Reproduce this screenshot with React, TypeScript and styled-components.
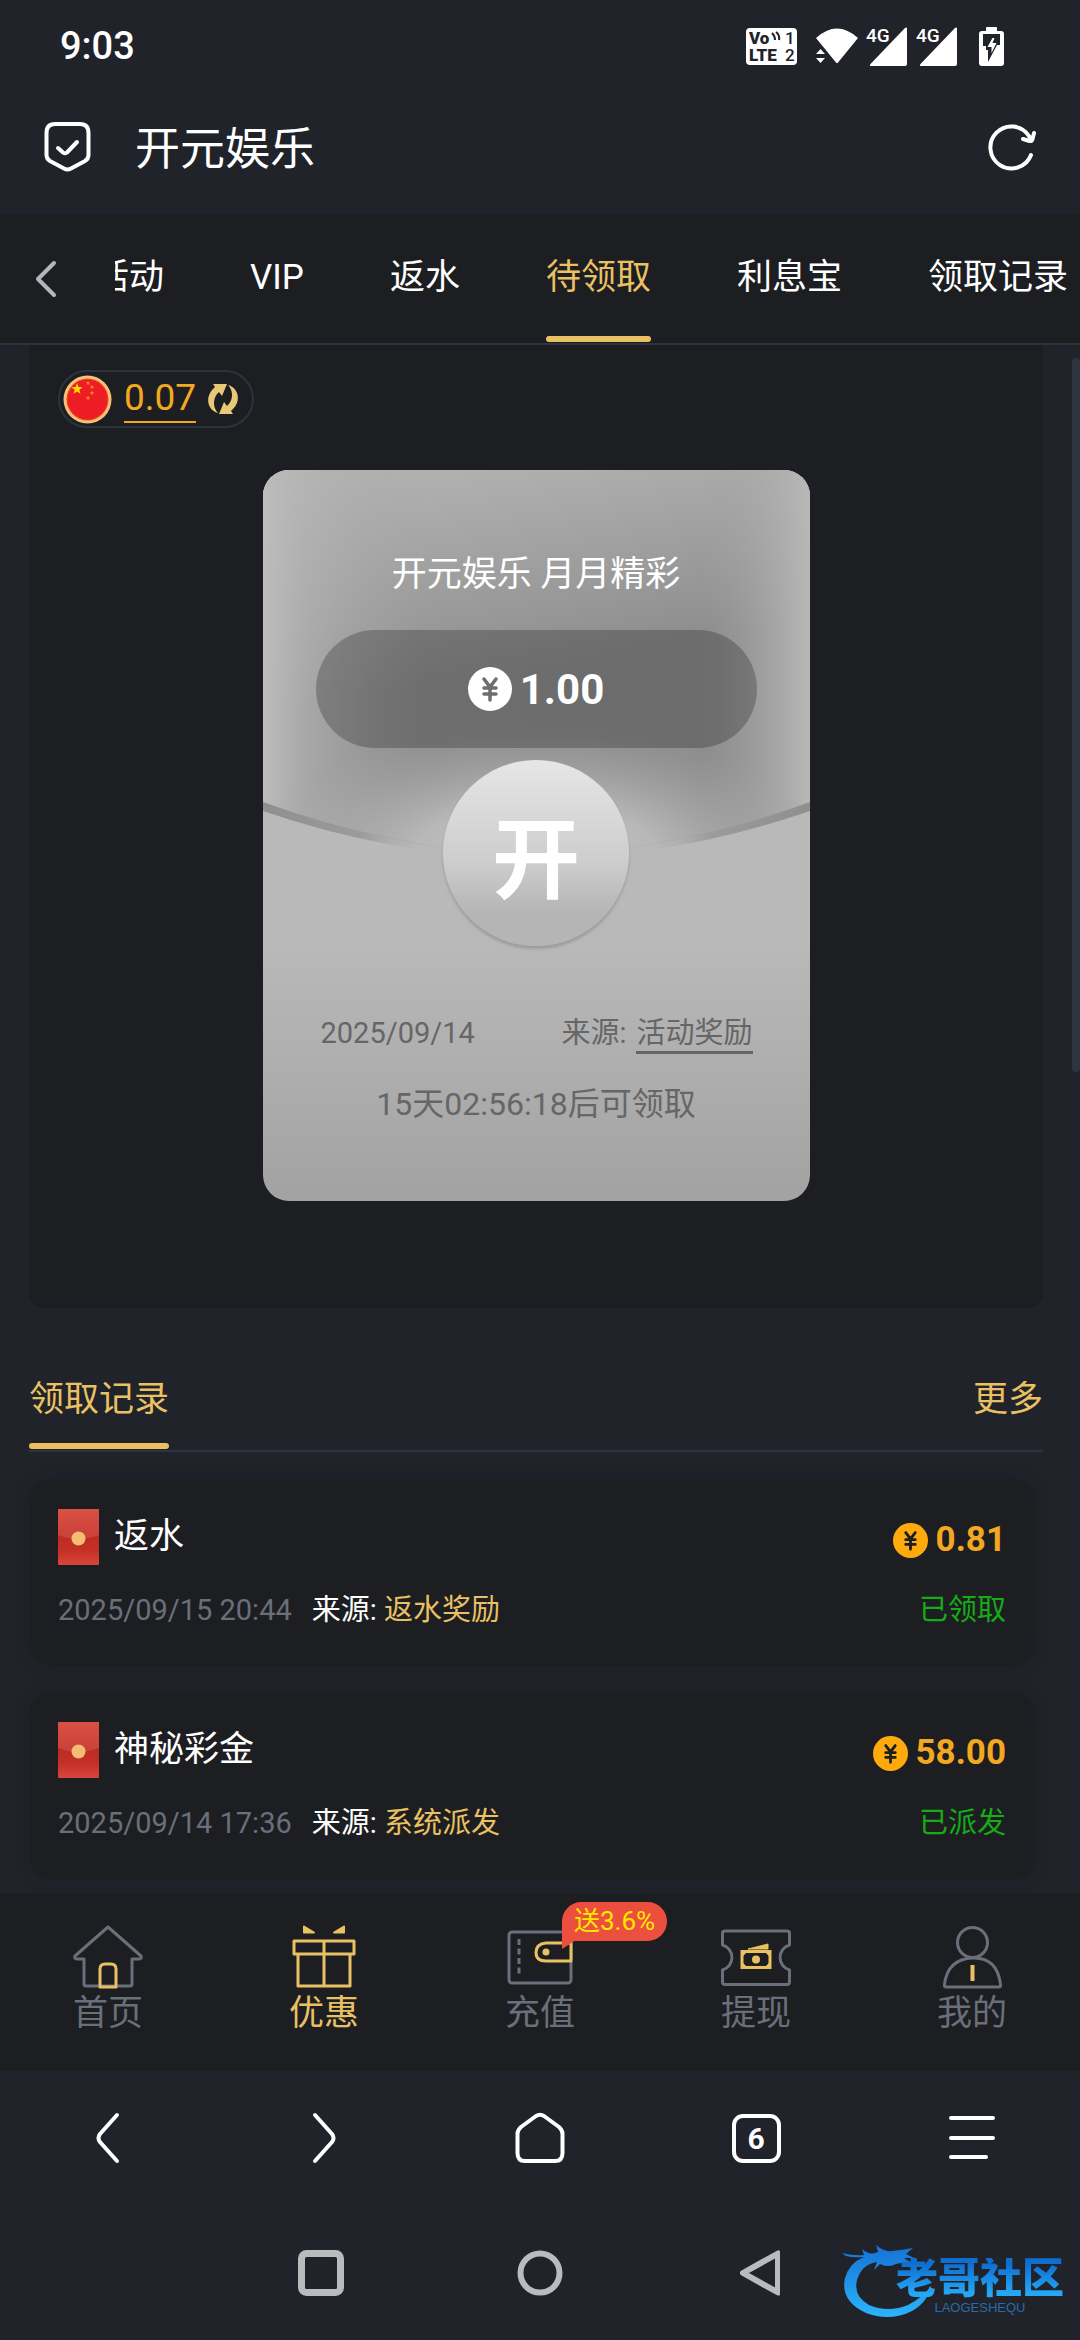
import React from "react";
import styled, { createGlobalStyle } from "styled-components";

const c = {
  bg: "#20232a",
  panel: "#1d1e22",
  line: "#2d333c",
  gold: "#e9c163",
  amber: "#f3a821",
  coin: "#ffaa0c",
  grey: "#6a6f7a",
  green: "#16ac16",
  white: "#ffffff",
};

const GlobalStyle = createGlobalStyle`
  *, *::before, *::after { box-sizing: border-box; }
  body {
    margin: 0;
    background: ${c.bg};
    color: ${c.white};
    font-family: Roboto, "Noto Sans CJK SC", sans-serif;
  }
  button {
    margin: 0;
    padding: 0;
    border: 0;
    background: none;
    color: inherit;
    font: inherit;
    cursor: pointer;
  }
  a { color: inherit; text-decoration: none; }
  svg { display: block; flex: none; }
`;

const Page = styled.div`
  position: relative;
  display: flex;
  flex-direction: column;
  min-height: 100vh;
  overflow: hidden;
`;

/* ---------- status bar and browser header ---------- */

const StatusBar = styled.div`
  display: flex;
  align-items: center;
  justify-content: space-between;
  height: 80px;
  padding: 12px 76px 0 60px;
  font-size: 38px;
  font-weight: 500;
`;

const StatusIcons = styled.div`
  display: flex;
  align-items: center;
  gap: 19px;
`;

const SignalGroup = styled.div`
  display: flex;
  align-items: center;
  gap: 4px;
`;

const Header = styled.header`
  display: flex;
  align-items: center;
  height: 134px;
  padding: 0 44px;
`;

const SiteTitle = styled.h1`
  flex: 1;
  margin: 0 0 0 43px;
  padding-top: 6px;
  font-size: 45px;
  font-weight: 400;
  line-height: 60px;
`;

/* ---------- tab strip ---------- */

const TabBar = styled.nav`
  display: flex;
  border-bottom: 2px solid ${c.line};
  background: ${c.panel};
`;

const TabBack = styled.button`
  display: flex;
  align-items: center;
  padding: 0 57px 0 34px;
`;

const TabScroller = styled.div`
  display: flex;
  flex: 1;
  justify-content: flex-end;
  gap: 86px;
  min-width: 0;
  padding-right: 12px;
  overflow: hidden;
`;

const Tab = styled.button<{ $active?: boolean }>`
  display: flex;
  flex: none;
  flex-direction: column;
  padding: 6px 0 1px;
  color: ${(p) => (p.$active ? c.gold : c.white)};
  font-size: 35px;
  line-height: 116px;
  white-space: nowrap;

  &::after {
    content: "";
    height: 6px;
    border-radius: 3px;
    background: ${(p) => (p.$active ? c.gold : "transparent")};
  }
`;

/* ---------- content ---------- */

const Main = styled.main`
  position: relative;
  flex: 1;
  padding: 0 37px 14px 29px;
`;

const ScrollThumb = styled.div`
  position: absolute;
  top: 13px;
  right: 0;
  width: 8px;
  height: 714px;
  border-radius: 4px;
  background: #2e3440;
`;

const ClaimPanel = styled.section`
  display: flex;
  flex-direction: column;
  align-items: center;
  gap: 42px;
  padding: 25px 29px 107px;
  border-radius: 0 0 14px 14px;
  background: ${c.panel};
`;

const Balance = styled.div`
  display: flex;
  align-items: center;
  align-self: flex-start;
  height: 58px;
  padding: 0 14px 0 3px;
  border: 2px solid ${c.line};
  border-radius: 29px;
`;

const BalanceValue = styled.a`
  margin: 0 12px;
  border-bottom: 2px solid ${c.amber};
  color: ${c.amber};
  font-size: 37px;
  line-height: 46px;
`;

const Packet = styled.article`
  position: relative;
  display: flex;
  flex-direction: column;
  align-items: center;
  width: 547px;
  max-width: 100%;
  padding: 80px 53px 75px;
  border-radius: 26px;
  overflow: hidden;
  isolation: isolate;
  color: #666666;
`;

const PacketArt = styled.svg`
  position: absolute;
  inset: 0;
  z-index: -1;
  width: 100%;
  height: 100%;
`;

const PacketTitle = styled.h2`
  margin: 0;
  color: ${c.white};
  font-size: 35px;
  font-weight: 400;
  line-height: 50px;
`;

const PacketAmount = styled.div`
  display: flex;
  align-items: center;
  align-self: stretch;
  justify-content: center;
  gap: 8px;
  height: 118px;
  margin-top: 30px;
  border-radius: 59px;
  background: rgba(0, 0, 0, 0.23);
  color: ${c.white};
  font-size: 42px;
  font-weight: 700;
`;

const OpenButton = styled.button`
  width: 186px;
  height: 186px;
  margin-top: 12px;
  padding-top: 16px;
  border-radius: 50%;
  background: linear-gradient(#e6e6e6, #cdcdcd 55%, #b5b5b5 82%);
  box-shadow: 0 3px 3px rgba(120, 120, 120, 0.45);
  color: ${c.white};
  font-size: 88px;
  font-weight: 700;
  line-height: 170px;
`;

const PacketInfo = styled.div`
  display: flex;
  align-self: stretch;
  margin: 69px 4px 0 5px;
  font-size: 29px;
  line-height: 36px;
`;

const PacketSource = styled.span`
  display: flex;
  gap: 10px;
  margin-left: auto;
`;

const SourceLink = styled.a`
  border-bottom: 3px solid #666666;
`;

const Countdown = styled.p`
  margin: 28px 0 0;
  font-size: 32px;
  line-height: 44px;
`;

const RecordsHead = styled.div`
  display: flex;
  align-items: flex-start;
  justify-content: space-between;
  margin-top: 60px;
  border-bottom: 2px solid ${c.line};
  color: ${c.gold};
  font-size: 35px;
  line-height: 64px;
`;

const RecordsTitle = styled.h2`
  margin: 0 0 1px;
  font-size: inherit;
  font-weight: 400;

  &::after {
    content: "";
    display: block;
    height: 6px;
    margin-top: 11px;
    border-radius: 3px;
    background: ${c.gold};
  }
`;

const Records = styled.ul`
  display: flex;
  flex-direction: column;
  gap: 26px;
  margin: 27px 7px 0 0;
  padding: 0;
  list-style: none;
`;

const RecordCard = styled.li`
  display: flex;
  flex-direction: column;
  gap: 25px;
  padding: 30px 30px 36px 29px;
  border-radius: 24px;
  background: ${c.panel};
  box-shadow: 0 0 14px rgba(29, 30, 34, 0.6);
`;

const Row = styled.div`
  display: flex;
  align-items: flex-end;
  font-size: 29px;
  line-height: 40px;
`;

const RecordName = styled.h3`
  flex: 1;
  margin: 0 0 0 15px;
  font-size: 35px;
  font-weight: 400;
  line-height: 56px;
`;

const Amount = styled.span`
  display: flex;
  align-items: center;
  gap: 8px;
  color: ${c.amber};
  font-size: 35px;
  font-weight: 700;
  line-height: 50px;
`;

const RecordTime = styled.time`
  margin-right: 20px;
  color: ${c.grey};
`;

const RecordSource = styled.span`
  flex: 1;
`;

const Gold = styled.span`
  color: ${c.gold};
`;

const State = styled.span`
  color: ${c.green};
`;

/* ---------- bottom bars ---------- */

const BottomNav = styled.nav`
  position: relative;
  display: grid;
  grid-template-columns: repeat(5, 1fr);
  height: 178px;
  padding-top: 27px;
  background: ${c.panel};
`;

const NavItem = styled.a<{ $active?: boolean }>`
  position: relative;
  display: flex;
  flex-direction: column;
  align-items: center;
  gap: 2px;
  color: ${(p) => (p.$active ? c.gold : c.grey)};
  font-size: 35px;
  line-height: 44px;
`;

const Badge = styled.span`
  position: absolute;
  top: -18px;
  left: calc(50% + 22px);
  padding: 0 12px;
  border-radius: 20px 20px 20px 0;
  background: #ec4f3e;
  color: #ffea00;
  font-size: 26px;
  line-height: 39px;
  white-space: nowrap;

  &::after {
    content: "";
    position: absolute;
    top: 38px;
    left: 0;
    border-top: 9px solid #ec4f3e;
    border-right: 14px solid transparent;
  }
`;

const BrowserBar = styled.nav`
  display: grid;
  grid-template-columns: repeat(5, 1fr);
  align-items: center;
  justify-items: center;
  height: 134px;
`;

const TabCount = styled.button`
  width: 49px;
  height: 49px;
  border: 4px solid ${c.white};
  border-radius: 11px;
  font-size: 30px;
  font-weight: 700;
  line-height: 41px;
  text-align: center;
`;

const SystemNav = styled.nav`
  display: grid;
  grid-template-columns: repeat(5, 1fr);
  align-items: center;
  justify-items: center;
  height: 135px;

  & > :first-child { grid-column: 2; }
`;

const Watermark = styled.div`
  position: absolute;
  right: 16px;
  bottom: 22px;
  display: flex;
`;

const WatermarkWords = styled.div`
  display: flex;
  flex-direction: column;
  align-items: center;
  margin: 14px 0 0 -36px;
`;

const WatermarkName = styled.strong`
  background: linear-gradient(#0f6fd0 15%, #25a8f5 85%);
  background-clip: text;
  color: transparent;
  font-size: 42px;
  font-weight: 900;
  line-height: 42px;
`;

const WatermarkLatin = styled.span`
  color: #2a6aa8;
  font-family: "Liberation Sans", sans-serif;
  font-size: 13px;
  line-height: 16px;
`;

/* ---------- drawings ---------- */

const VolteIcon = () => (
  <svg width="51" height="37" viewBox="0 0 51 37" fontFamily="Roboto, sans-serif" fill={c.bg}>
    <rect width="51" height="37" rx="4" fill="#fff" />
    <text x="3" y="16" fontSize="17" fontWeight="900">Vo</text>
    <text x="3" y="33" fontSize="17" fontWeight="900">LTE</text>
    <text x="39" y="16" fontSize="17" fontWeight="500">1</text>
    <text x="39" y="33" fontSize="17" fontWeight="500">2</text>
    <path d="M26 5q3 3 3 7M30 4q4 3 3 8" stroke={c.bg} strokeWidth="2" fill="none" />
  </svg>
);

const WifiIcon = () => (
  <svg width="44" height="36" viewBox="0 0 44 36" fill="#fff">
    <path d="M0 10Q21 -9 42 10L22 34.500Q21 35.500 20 34.500Z" />
    <path d="M4.500 21l4.500 5H0zM4.500 35l4.500-5H0z" stroke={c.bg} strokeWidth="2" paintOrder="stroke" />
  </svg>
);

const SignalIcon = () => (
  <svg width="46" height="49" viewBox="-2 -5 46 49" fill="#fff">
    <path d="M5 39Q3 39 4.500 37L38.500 1.500Q41 -.5 41 2V37Q41 39 39 39Z" />
    <text x="0" y="15" fontFamily="Roboto, sans-serif" fontSize="19" fontWeight="500" stroke={c.bg} strokeWidth="4" paintOrder="stroke">4G</text>
  </svg>
);

const BatteryIcon = () => (
  <svg width="25" height="39" viewBox="0 0 25 39">
    <path d="M8 0h9q1 0 1 1v3h4q3 0 3 3v29q0 3-3 3H3q-3 0-3-3V7q0-3 3-3h4V1q0-1 1-1z" fill="#fff" />
    <path d="M4 7h17v11h-3l-9 17v-12H7v-4H4z" fill={c.bg} />
    <path d="M13.500 11l-5 9h4v6l5-10h-4l2-5z" fill="#fff" />
  </svg>
);

const ShieldIcon = () => (
  <svg width="48" height="50" viewBox="0 0 48 50" fill="none" stroke="#fff" strokeWidth="4" strokeLinecap="round" strokeLinejoin="round">
    <path d="M11 2H36Q44.500 2 44.500 11V33Q44.500 37 41 39L27 46.500Q23.500 48.500 20 46.500L6 39Q2.500 37 2.500 33V11Q2.500 2 11 2Z" />
    <path d="M14 26l5 4.500q2 1.500 4 0L33 20" />
  </svg>
);

const RefreshIcon = () => (
  <svg width="48" height="48" viewBox="0 0 48 48" fill="none" stroke="#fff" strokeWidth="4" strokeLinecap="round" strokeLinejoin="round">
    <path d="M43 32A21 21 0 1 1 41 13L43 17" />
    <path d="M46 10L44.500 16Q44 18.500 41.500 18L35 16" />
  </svg>
);

const Coin = ({ size, fill, ink }: { size: number; fill: string; ink: string }) => (
  <svg width={size} height={size} viewBox="0 0 44 44">
    <circle cx="22" cy="22" r="22" fill={fill} />
    <path d="M16 12l6 8 6-8M22 20v13M16 21h12M16 27h12" fill="none" stroke={ink} strokeWidth="3.500" strokeLinecap="round" />
  </svg>
);

const star = (x: number, y: number, r: number) =>
  Array.from({ length: 10 }, (_, i) => {
    const a = (Math.PI / 5) * i - Math.PI / 2;
    const q = i % 2 ? r * 0.4 : r;
    return `${x + q * Math.cos(a)},${y + q * Math.sin(a)}`;
  }).join(" ");

const FlagIcon = () => (
  <svg width="49" height="49" viewBox="0 0 49 49">
    <circle cx="24.500" cy="24.500" r="24" fill="#f8bf76" />
    <circle cx="24.500" cy="24.500" r="21" fill="#e0562c" />
    <circle cx="24.500" cy="24.500" r="20" fill="#ee1c25" />
    <polygon points={star(14, 14, 6)} fill="#ffde00" />
    <g fill="#f58a1f">
      <polygon points={star(25, 8, 2.5)} />
      <polygon points={star(29, 12, 2.5)} />
      <polygon points={star(29, 18, 2.5)} />
      <polygon points={star(25, 23, 2.5)} />
    </g>
  </svg>
);

const SwapIcon = () => (
  <svg width="30" height="32" viewBox="0 0 30 32" fill="#e9c878">
    <path d="M10 30C-1 27 -3 14 5 6L7 4L5 1L19 1L14 13L11 9C5 14 4 24 10 30Z" />
    <path d="M20 2C31 5 33 18 25 26L23 28L25 31L11 31L16 19L19 23C25 18 26 8 20 2Z" />
  </svg>
);

const PacketBackground = () => (
  <PacketArt viewBox="0 0 547 731" preserveAspectRatio="none" aria-hidden="true">
    <defs>
      <linearGradient id="body" x2="0" y2="1">
        <stop offset=".65" stopColor="#b9b9b9" />
        <stop offset="1" stopColor="#a2a2a2" />
      </linearGradient>
      <linearGradient id="sides">
        <stop offset="0" stopColor="#bdbdbd" />
        <stop offset=".08" stopColor="#b3b3b3" stopOpacity=".7" />
        <stop offset=".3" stopColor="#a0a0a0" stopOpacity=".1" />
        <stop offset=".8" stopColor="#a0a0a0" stopOpacity="0" />
        <stop offset="1" stopColor="#b8b8b8" />
      </linearGradient>
      <linearGradient id="top" x2=".25" y2="1">
        <stop offset="0" stopColor="#b8b8b8" />
        <stop offset=".6" stopColor="#b8b8b8" stopOpacity="0" />
      </linearGradient>
      <radialGradient id="glow" gradientUnits="userSpaceOnUse" cx="0" cy="0" r="1" gradientTransform="translate(273 385) scale(300 130)">
        <stop offset="0" stopColor="#cacaca" />
        <stop offset=".4" stopColor="#bfbfbf" stopOpacity=".85" />
        <stop offset=".7" stopColor="#b2b2b2" stopOpacity=".4" />
        <stop offset="1" stopColor="#a0a0a0" stopOpacity="0" />
      </radialGradient>
      <linearGradient id="edge">
        <stop offset="0" stopColor="#8f8f8f" />
        <stop offset=".18" stopColor="#9b9b9b" />
        <stop offset=".32" stopColor="#bbbbbb" stopOpacity="0" />
        <stop offset=".68" stopColor="#bbbbbb" stopOpacity="0" />
        <stop offset=".82" stopColor="#9b9b9b" />
        <stop offset="1" stopColor="#8f8f8f" />
      </linearGradient>
    </defs>
    <rect width="547" height="731" fill="url(#body)" />
    <path d="M0 0H547V333Q273.500 433 0 333Z" fill="#8d8d8d" />
    <path d="M0 0H547V333Q273.500 433 0 333Z" fill="url(#top)" />
    <path d="M0 0H547V333Q273.500 433 0 333Z" fill="url(#sides)" />
    <path d="M0 0H547V333Q273.500 433 0 333Z" fill="url(#glow)" />
    <path d="M0 332Q273.500 432 547 332V341Q273.500 435 0 341Z" fill="url(#edge)" />
  </PacketArt>
);

const EnvelopeIcon = () => (
  <svg width="41" height="56" viewBox="0 0 41 56">
    <defs>
      <linearGradient id="env" x2="0" y2="1">
        <stop offset=".4" stopColor="#b92a22" />
        <stop offset=".75" stopColor="#c53027" />
        <stop offset="1" stopColor="#d8463a" />
      </linearGradient>
      <linearGradient id="envFlap" x2="0" y2="1">
        <stop offset="0" stopColor="#da5043" />
        <stop offset="1" stopColor="#c9403a" />
      </linearGradient>
    </defs>
    <rect width="41" height="56" rx="1" fill="url(#env)" />
    <path d="M0 0H41V26Q20.500 34 0 26Z" fill="url(#envFlap)" />
    <circle cx="20.500" cy="29.500" r="7" fill="#f5bd74" />
  </svg>
);

const navSvg = {
  width: 70,
  height: 70,
  viewBox: "0 0 70 70",
  fill: "none",
  stroke: "currentColor",
  strokeWidth: 3,
  strokeLinejoin: "round" as const,
};

const HomeIcon = () => (
  <svg {...navSvg}>
    <path d="M35 7L68 36Q69 39 66 39H59V64Q59 66 57 66H13Q11 66 11 64V39H4Q1 39 2 36Z" />
    <path d="M27 67V49Q27 44 32 44H38Q43 44 43 49V67Z" stroke={c.gold} />
  </svg>
);

const GiftIcon = () => (
  <svg {...navSvg}>
    <path d="M5 21H65V34H5ZM9 34V66H61V34M35 21V66" />
    <path d="M15 6.500l10 6H15zM55 6.500l-10 6H55z" fill="currentColor" strokeWidth="2" />
  </svg>
);

const WalletIcon = () => (
  <svg {...navSvg}>
    <rect x="4" y="12" width="62" height="51" rx="3" />
    <path d="M14 19V54" strokeDasharray="6 3.500" />
    <path d="M66 23H41Q31 24 31 32.500T41 41H66Z" stroke={c.gold} fill={c.panel} />
    <circle cx="41" cy="32" r="3.500" fill={c.gold} stroke="none" />
  </svg>
);

const TicketIcon = () => (
  <svg {...navSvg}>
    <path d="M4 11H66Q68.500 11 68.500 13V25A13 13 0 0 0 68.500 50V62Q68.500 64.500 66 64.500H4Q1.500 64.500 1.500 62V50A13 13 0 0 0 1.500 25V13Q1.500 11 4 11Z" />
    <g stroke={c.gold}>
      <path d="M21 31.500H49V47.500H21Z" strokeLinejoin="miter" />
      <path d="M27 29L47 24V29Z" fill={c.gold} strokeWidth="1" />
      <circle cx="35" cy="39.500" r="4" fill={c.gold} stroke="none" />
      <path d="M21 35l3-3M49 35l-3-3M21 44l3 3M49 44l-3 3" />
    </g>
  </svg>
);

const UserIcon = () => (
  <svg {...navSvg}>
    <circle cx="35.500" cy="22.500" r="15" />
    <path d="M9 67Q7 67 7.500 64Q11 39 35.500 38T63.500 64Q64 67 62 67Z" />
    <path d="M35.500 45V61" stroke={c.gold} strokeWidth="4" />
  </svg>
);

const lineSvg = {
  fill: "none",
  stroke: "#fff",
  strokeWidth: 4,
  strokeLinecap: "round" as const,
  strokeLinejoin: "round" as const,
};

const BackGlyph = () => (
  <svg width="50" height="52" viewBox="0 0 50 52" {...lineSvg}>
    <path d="M34 3L17 22Q14 26 17 30L34 49" />
  </svg>
);

const ForwardGlyph = () => (
  <svg width="50" height="52" viewBox="0 0 50 52" {...lineSvg}>
    <path d="M16 3L33 22Q36 26 33 30L16 49" />
  </svg>
);

const HomeGlyph = () => (
  <svg width="50" height="52" viewBox="0 0 50 52" {...lineSvg}>
    <path d="M21 4Q25 1.500 29 4L44 15Q47.500 18 47.500 22V41Q47.500 49 40 49H10Q2.500 49 2.500 41V22Q2.500 18 6 15Z" />
  </svg>
);

const MenuGlyph = () => (
  <svg width="50" height="52" viewBox="0 0 50 52" {...lineSvg}>
    <path d="M4 6H46M4 26H46M4 45H39" />
  </svg>
);

const DragonMark = () => (
  <svg width="90" height="74" viewBox="0 0 90 74">
    <defs>
      <linearGradient id="dragon" x2="0" y2="1">
        <stop offset="0" stopColor="#1572d4" />
        <stop offset="1" stopColor="#2cb4fa" />
      </linearGradient>
    </defs>
    <path
      d="M0 9Q12 12 22 11L20 5Q28 12 36 8L34 1Q42 8 50 7Q60 6 71 4L64 10L72 14L62 14L71 20Q60 18 54 20Q46 24 38 20L32 26L35 18Q20 20 15 36Q11 52 27 61Q46 69 66 61Q80 54 89 42Q86 58 70 67Q48 78 24 69Q-2 57 3 34Q7 19 22 13Q12 14 4 12Z"
      fill="url(#dragon)"
    />
  </svg>
);

/* ---------- data ---------- */

const tabs = ["活动", "VIP", "返水", "待领取", "利息宝", "领取记录"];

const records = [
  { name: "返水", amount: "0.81", time: "2025/09/15 20:44", source: "返水奖励", state: "已领取" },
  { name: "神秘彩金", amount: "58.00", time: "2025/09/14 17:36", source: "系统派发", state: "已派发" },
];

const navItems = [
  { label: "首页", Icon: HomeIcon },
  { label: "优惠", Icon: GiftIcon, active: true },
  { label: "充值", Icon: WalletIcon, badge: "送3.6%" },
  { label: "提现", Icon: TicketIcon },
  { label: "我的", Icon: UserIcon },
];

export default function App() {
  return (
    <Page>
      <GlobalStyle />
      <StatusBar>
        <span>9:03</span>
        <StatusIcons>
          <VolteIcon />
          <SignalGroup>
            <WifiIcon />
            <SignalIcon />
            <SignalIcon />
          </SignalGroup>
          <BatteryIcon />
        </StatusIcons>
      </StatusBar>

      <Header>
        <ShieldIcon />
        <SiteTitle>开元娱乐</SiteTitle>
        <button aria-label="刷新"><RefreshIcon /></button>
      </Header>

      <TabBar>
        <TabBack aria-label="返回">
          <svg width="24" height="38" viewBox="0 0 24 38" fill="none" stroke="#b4b6bb" strokeWidth="4" strokeLinecap="round" strokeLinejoin="round">
            <path d="M20 3L4 19L20 35" />
          </svg>
        </TabBack>
        <TabScroller>
          {tabs.map((t) => (
            <Tab key={t} $active={t === "待领取"}>{t}</Tab>
          ))}
        </TabScroller>
      </TabBar>

      <Main>
        <ScrollThumb />
        <ClaimPanel>
          <Balance>
            <FlagIcon />
            <BalanceValue href="#balance">0.07</BalanceValue>
            <button aria-label="刷新余额"><SwapIcon /></button>
          </Balance>
          <Packet>
            <PacketBackground />
            <PacketTitle>开元娱乐 月月精彩</PacketTitle>
            <PacketAmount>
              <Coin size={44} fill="#ffffff" ink="#6e6e6e" />
              1.00
            </PacketAmount>
            <OpenButton>开</OpenButton>
            <PacketInfo>
              <time>2025/09/14</time>
              <PacketSource>
                <span>来源:</span>
                <SourceLink href="#source">活动奖励</SourceLink>
              </PacketSource>
            </PacketInfo>
            <Countdown>15天02:56:18后可领取</Countdown>
          </Packet>
        </ClaimPanel>

        <RecordsHead>
          <RecordsTitle>领取记录</RecordsTitle>
          <a href="#more">更多</a>
        </RecordsHead>
        <Records>
          {records.map((r) => (
            <RecordCard key={r.time}>
              <Row>
                <EnvelopeIcon />
                <RecordName>{r.name}</RecordName>
                <Amount>
                  <Coin size={35} fill={c.coin} ink={c.panel} />
                  {r.amount}
                </Amount>
              </Row>
              <Row>
                <RecordTime>{r.time}</RecordTime>
                <RecordSource>来源: <Gold>{r.source}</Gold></RecordSource>
                <State>{r.state}</State>
              </Row>
            </RecordCard>
          ))}
        </Records>
      </Main>

      <BottomNav>
        {navItems.map(({ label, Icon, active, badge }) => (
          <NavItem key={label} href={`#${label}`} $active={active}>
            <Icon />
            {label}
            {badge && <Badge>{badge}</Badge>}
          </NavItem>
        ))}
      </BottomNav>

      <BrowserBar>
        <button aria-label="后退"><BackGlyph /></button>
        <button aria-label="前进"><ForwardGlyph /></button>
        <button aria-label="主页"><HomeGlyph /></button>
        <TabCount>6</TabCount>
        <button aria-label="菜单"><MenuGlyph /></button>
      </BrowserBar>

      <SystemNav>
        <button aria-label="最近任务">
          <svg width="52" height="48" viewBox="0 0 52 48" fill="none" stroke="#b9bbbf" strokeWidth="7">
            <rect x="3.500" y="4.500" width="39" height="39" rx="5" />
          </svg>
        </button>
        <button aria-label="主屏幕">
          <svg width="48" height="48" viewBox="0 0 48 48" fill="none" stroke="#b9bbbf" strokeWidth="6">
            <circle cx="24" cy="24" r="19.500" />
          </svg>
        </button>
        <button aria-label="返回上级">
          <svg width="48" height="48" viewBox="0 0 48 48" fill="none" stroke="#b9bbbf" strokeWidth="6" strokeLinejoin="round">
            <path d="M46 4.500V43.500L11 24Z" />
          </svg>
        </button>
      </SystemNav>

      <Watermark>
        <DragonMark />
        <WatermarkWords>
          <WatermarkName>老哥社区</WatermarkName>
          <WatermarkLatin>LAOGESHEQU</WatermarkLatin>
        </WatermarkWords>
      </Watermark>
    </Page>
  );
}
